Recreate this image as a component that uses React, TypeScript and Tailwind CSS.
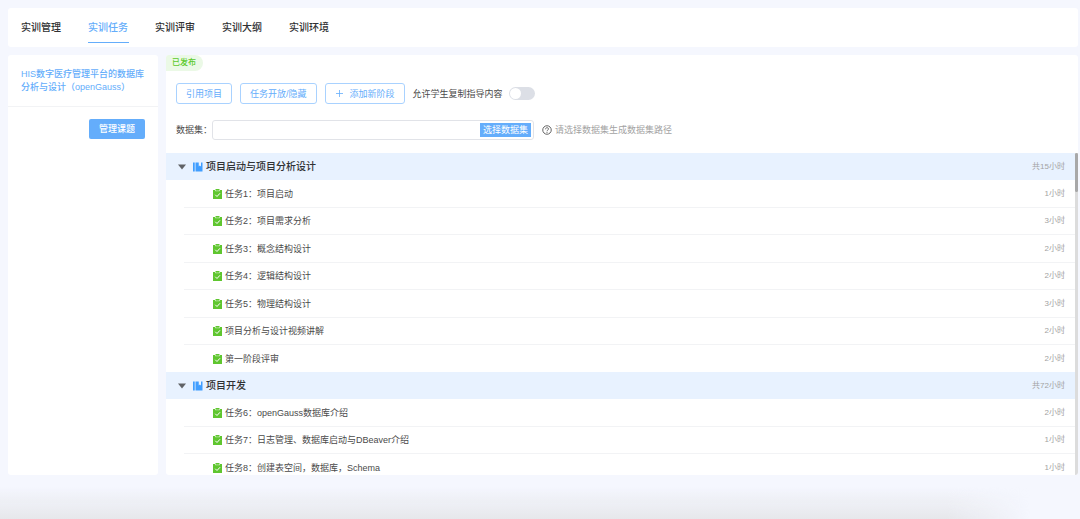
import React from 'react';

const tabs = ['实训管理', '实训任务', '实训评审', '实训大纲', '实训环境'];

const stages = [
  {
    name: '项目启动与项目分析设计',
    total: '共15小时',
    tasks: [
      { name: '任务1：项目启动', hours: '1小时' },
      { name: '任务2：项目需求分析', hours: '3小时' },
      { name: '任务3：概念结构设计', hours: '2小时' },
      { name: '任务4：逻辑结构设计', hours: '2小时' },
      { name: '任务5：物理结构设计', hours: '3小时' },
      { name: '项目分析与设计视频讲解', hours: '2小时' },
      { name: '第一阶段评审', hours: '2小时' },
    ],
  },
  {
    name: '项目开发',
    total: '共72小时',
    tasks: [
      { name: '任务6：openGauss数据库介绍', hours: '2小时' },
      { name: '任务7：日志管理、数据库启动与DBeaver介绍', hours: '1小时' },
      { name: '任务8：创建表空间，数据库，Schema', hours: '1小时' },
    ],
  },
];

const BookIcon = () => (
  <svg width="10" height="10" viewBox="0 0 20 20" fill="#409eff" className="shrink-0">
    <path d="M0 1h3.500v18H0zM5 1h6.500v8l2.200-2 2.300 2V1h3v18H5z" />
  </svg>
);

const TaskIcon = () => (
  <svg width="9" height="10" viewBox="0 0 18 20" className="shrink-0">
    <path d="M0 2h4v2.500h10V2h4v18H0z" fill="#5fc62f" />
    <path d="M5 0h8v3.500H5zM2 4h14v2H2z" fill="#5fc62f" />
    <path d="M4.500 4.300h9" stroke="#b5e59c" strokeWidth="1" />
    <path d="M4.500 11.500l3.500 3.500 6-6.500" fill="none" stroke="#fff" strokeWidth="2" />
  </svg>
);

const OutlineButton = ({ children }: { children: React.ReactNode }) => (
  <button type="button" className="flex h-[21px] items-center rounded-[3px] border border-[#a9d2ff] bg-white px-[9px] text-[#64adfb]">
    {children}
  </button>
);

const App = () => {
  return (
    <div className="flex h-screen flex-col bg-[#f5f7fe] pt-2 pr-0.5 pl-2 font-['Liberation_Sans','Noto_Sans_CJK_SC',sans-serif] text-[9px] leading-3 text-[#4a4a4a]">
      <nav className="flex gap-[26px] rounded-[3px] bg-white px-[13px] pb-1">
        {tabs.map((tab, i) => (
          <a
            key={tab}
            href="#"
            className={
              i === 1
                ? 'h-[35px] min-w-[41px] border-b border-[#64adfb] pt-3 text-[10px] leading-4 font-medium text-[#64adfb]'
                : 'h-[35px] min-w-[41px] pt-3 text-[10px] leading-4 font-medium text-[#303133]'
            }
          >
            {tab}
          </a>
        ))}
      </nav>

      <div className="mt-2 flex min-h-0 flex-1 gap-2">
        {/* Project */}
        <aside className="w-[150px] shrink-0 rounded-[3px] bg-white">
          <h1 className="border-b border-[#f2f3f5] px-[13px] pt-[13px] pb-3 leading-[13px] font-medium text-[#64adfb]">
            HIS数字医疗管理平台的数据库分析与设计（openGauss）
          </h1>
          <div className="flex justify-end px-[13px] pt-3">
            <button type="button" className="h-5 rounded-xs bg-[#64adfb] px-2.5 font-medium text-white">管理课题</button>
          </div>
        </aside>

        {/* Stages and tasks */}
        <main className="flex min-w-0 flex-1 flex-col overflow-hidden rounded-[3px] bg-white">
          <span className="block h-4 w-[37px] shrink-0 rounded-r-full bg-[#ebf9e6] pl-1.5 text-[8px] leading-4 font-medium text-[#5cc92c]">已发布</span>

          <div className="mt-3 flex items-center gap-2 pl-2.5">
            <OutlineButton>引用项目</OutlineButton>
            <OutlineButton>任务开放/隐藏</OutlineButton>
            <OutlineButton>
              <svg width="9" height="9" viewBox="0 0 9 9" stroke="currentColor" strokeWidth="0.800" className="mr-1.5">
                <path d="M4.500 1v7M1 4.500h7" />
              </svg>
              添加新阶段
            </OutlineButton>
            <label className="flex items-center gap-1.5">
              允许学生复制指导内容
              <input
                type="checkbox"
                role="switch"
                className="h-[13px] w-[26px] appearance-none rounded-full bg-[#dcdfe6] p-px before:block before:size-[11px] before:rounded-full before:bg-white checked:bg-[#64adfb] checked:before:ml-auto"
              />
            </label>
          </div>

          <div className="mt-4 flex items-center pl-2.5">
            <label htmlFor="dataset">数据集：</label>
            <div className="flex h-5 w-[322px] items-center rounded-[3px] border border-[#e1e3e8] pr-0.5">
              <input id="dataset" type="text" className="min-w-0 flex-1 px-2 outline-none" />
              <button type="button" className="h-[14px] bg-[#64adfb] px-[3px] text-white">选择数据集</button>
            </div>
            <svg width="10" height="10" viewBox="0 0 20 20" fill="none" stroke="#555" strokeWidth="1.800" className="mr-[3px] ml-2">
              <circle cx="10" cy="10" r="8.500" />
              <path d="M7 8.500c0-4 6-4 6-.500 0 2-3 2.200-3 4.500M10 14v1.800" />
            </svg>
            <span className="text-[#a3a3a3]">请选择数据集生成数据集路径</span>
          </div>

          <div className="mt-[13px] flex min-h-0 flex-1">
            <div className="min-w-0 flex-1 overflow-y-auto [scrollbar-width:none]">
              {stages.map((stage) => (
                <section key={stage.name}>
                  <h2 className="flex h-[27px] items-center bg-[#e8f2ff] pr-2.5 pl-3 text-[10px] font-medium text-[#303133]">
                    <button type="button" aria-label={stage.name} className="mr-[7px]">
                      <svg width="8" height="6" viewBox="0 0 8 6" fill="#606266">
                        <path d="M0 .500h8L4 5.500z" />
                      </svg>
                    </button>
                    <BookIcon />
                    <span className="ml-[3px] flex-1">{stage.name}</span>
                    <span className="text-[8px] font-normal text-[#a3a3a3]">{stage.total}</span>
                  </h2>
                  <ul className="pl-[18px]">
                    {stage.tasks.map((task) => (
                      <li
                        key={task.name}
                        className="flex h-[27px] items-center border-b border-[#f2f3f5] pr-2.5 pl-[29px] last:border-0 not-last:odd:h-7"
                      >
                        <TaskIcon />
                        <span className="ml-[3px] flex-1">{task.name}</span>
                        <span className="text-[8px] text-[#a3a3a3]">{task.hours}</span>
                      </li>
                    ))}
                  </ul>
                </section>
              ))}
            </div>
            {/* Scroll track */}
            <div className="w-[3px] bg-[#dcdcdc]">
              <div className="h-[39px] rounded-full bg-[#a8a8a8]"></div>
            </div>
          </div>
        </main>
      </div>

      <div className="mt-3 mr-12 -ml-2 h-8 shrink-0 bg-linear-to-b from-transparent to-[#e6e7eb] mask-r-from-92% mask-r-to-100%"></div>
    </div>
  );
};

export default App;
